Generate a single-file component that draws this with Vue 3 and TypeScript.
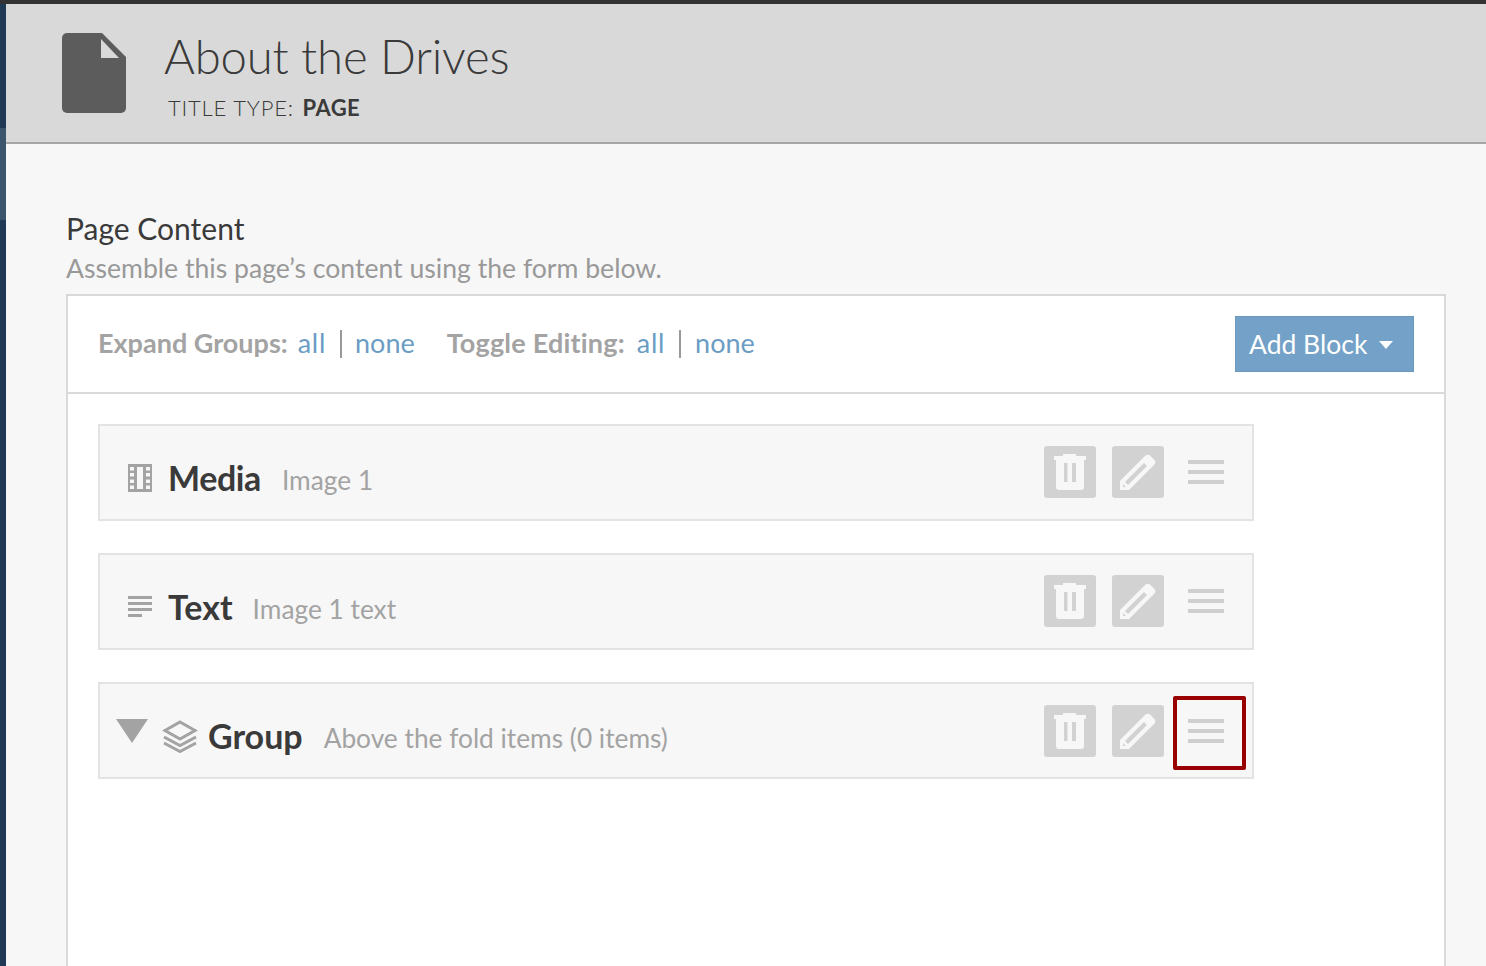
<script setup lang="ts">
interface Block { name: string; detail: string; kind: 'media' | 'text' | 'group'; flagged?: boolean }
const blocks: Block[] = [
  { name: 'Media', detail: 'Image 1', kind: 'media' },
  { name: 'Text', detail: 'Image 1 text', kind: 'text' },
  { name: 'Group', detail: 'Above the fold items (0 items)', kind: 'group', flagged: true },
]
</script>

<template>
  <div class="app">
    <div class="topline"></div>
    <div class="shell">
      <div class="rail"><div class="rail-a"></div><div class="rail-b"></div><div class="rail-c"></div></div>
      <div class="main">
        <header class="head">
          <svg class="doc" width="64" height="80" viewBox="0 0 64 80">
            <path fill="#5c5c5c" d="M5 0H40L64 24V75a5 5 0 0 1-5 5H5a5 5 0 0 1-5-5V5a5 5 0 0 1 5-5Z"/>
            <path fill="#d9d9d9" d="M39 6L57 25H39Z"/>
          </svg>
          <div class="head-text">
            <h1>About the Drives</h1>
            <p class="type">TITLE TYPE: <b>PAGE</b></p>
          </div>
        </header>
        <section class="content">
          <h2>Page Content</h2>
          <p class="hint">Assemble this page’s content using the form below.</p>
          <div class="panel">
            <div class="toolbar">
              <div class="filter"><strong>Expand Groups:</strong><a class="all">all</a><i></i><a>none</a></div>
              <div class="filter second"><strong>Toggle Editing:</strong><a class="all">all</a><i></i><a>none</a></div>
              <button class="add">Add Block<span class="caret"></span></button>
            </div>
            <div class="list">
              <div v-for="b in blocks" :key="b.name" class="block" :class="b.kind">
                <svg v-if="b.kind === 'group'" class="tri" width="32" height="24" viewBox="0 0 32 24"><path fill="#a3a3a3" d="M0 0H32L16 24Z"/></svg>
                <svg v-if="b.kind === 'media'" class="ic" width="24" height="28" viewBox="0 0 24 28">
                  <path fill="#a3a3a3" fill-rule="evenodd" d="M0 0H24V28H0ZM2 3V6.500H6V3ZM2 9V12.500H6V9ZM2 15.500V19H6V15.500ZM2 21.500V25H6V21.500ZM18 3V6.500H22V3ZM18 9V12.500H22V9ZM18 15.500V19H22V15.500ZM18 21.500V25H22V21.500ZM9 3V25H15V3Z"/>
                </svg>
                <svg v-if="b.kind === 'text'" class="ic" width="24" height="22" viewBox="0 0 24 22">
                  <path fill="#a3a3a3" d="M0 0H24V3H0ZM0 6H24V9H0ZM0 12H24V15H0ZM0 18H14V21H0Z"/>
                </svg>
                <svg v-if="b.kind === 'group'" class="ic" width="36" height="33" viewBox="0 0 36 33" fill="none" stroke="#a3a3a3" stroke-width="3">
                  <path d="M18 2L33 10.500L18 19L3 10.500Z"/>
                  <path d="M2 17L18 25.500L34 17"/>
                  <path d="M2 23L18 31.500L34 23"/>
                </svg>
                <span class="name">{{ b.name }}</span>
                <span class="detail">{{ b.detail }}</span>
                <div class="actions">
                  <span class="square">
                    <svg width="32" height="36" viewBox="0 0 32 36">
                      <path fill="#f7f7f7" fill-rule="evenodd" d="M9 0H22V2H32V6H30V33a3 3 0 0 1-3 3H5a3 3 0 0 1-3-3V6H0V2H9ZM10 9V28H13.500V9ZM18 9V28H22V9Z"/>
                    </svg>
                  </span>
                  <span class="square">
                    <svg width="36" height="36" viewBox="0 0 36 36">
                      <path fill="#f7f7f7" d="M0 36V27L25 2a4 4 0 0 1 5.500 0L34 5.500a4 4 0 0 1 0 5.500L9 36Z"/>
                      <path fill="#d2d2d2" d="M5 28L24 9L27 12L8 31ZM3 33V30L6 33Z"/>
                    </svg>
                  </span>
                  <span class="grip"><span></span><span></span><span></span></span>
                </div>
                <div v-if="b.flagged" class="flag"></div>
              </div>
            </div>
          </div>
        </section>
      </div>
    </div>
  </div>
</template>

<style scoped>
.app { height: 966px; overflow: hidden; display: flex; flex-direction: column; background: #f7f7f7; color: #3a3a3a; font-family: "Lato", "Open Sans", sans-serif; }
.topline { height: 4px; background: #333; flex: none; }
.shell { flex: 1; display: flex; min-height: 0; }
.rail { width: 6px; flex: none; display: flex; flex-direction: column; }
.rail-a { height: 124px; background: #203a56; }
.rail-b { height: 92px; background: #3c546c; }
.rail-c { flex: 1; background: #203a56; }
.main { flex: 1; min-width: 0; }
.head { height: 138px; box-sizing: content-box; background: #d9d9d9; border-bottom: 2px solid #a6a6a6; display: flex; padding-left: 56px; }
.doc { margin-top: 29px; }
.head-text { margin-left: 38px; }
h1 { margin: 21px 0 0; font-size: 47.300px; line-height: 62px; font-weight: 300; letter-spacing: -0.2px; color: #3a3a3a; }
.type { margin: 7px 0 0 4px; font-size: 22px; line-height: 28px; font-weight: 300; letter-spacing: 0.8px; }
.type b { font-weight: 700; margin-left: 2px; letter-spacing: 0.4px; }
.content { padding: 64px 40px 0 60px; }
h2 { margin: 0; font-size: 30px; line-height: 40px; font-weight: 400; color: #3a3a3a; }
.hint { margin: 0; font-size: 26.600px; line-height: 40px; color: #999; }
.panel { margin-top: 6px; background: #fff; border: 2px solid #d9d9d9; height: 700px; }
.toolbar { height: 98px; box-sizing: border-box; border-bottom: 2px solid #d9d9d9; display: flex; align-items: center; padding: 0 30px 0; font-size: 27px; }
.filter { display: flex; align-items: center; margin-top: -4px; }
.filter strong { font-weight: 700; color: #a3a3a3; margin-right: 10px; }
.filter a { color: #6b9cc4; }
.filter .all { letter-spacing: 0.7px; }
.filter i { width: 2px; height: 28px; background: #999; margin: 4px 13px 0 14px; }
.second { margin-left: 32px; }
.second strong { letter-spacing: 0.2px; margin-right: 12px; }
.second i { margin-right: 14px; }
.add { margin-left: auto; width: 179px; height: 56px; background: #73a1c7; border: 1px solid #6a98be; color: #fff; font: inherit; font-size: 26.500px; padding: 0 0 1px 13px; display: flex; align-items: center; justify-content: flex-start; gap: 12px; }
.caret { flex: none; margin-top: 2px; border-style: solid; border-width: 8px 7.500px 0; border-color: #fff transparent transparent; }
.list { padding: 30px; display: flex; flex-direction: column; gap: 32px; align-items: flex-start; }
.block { position: relative; width: 1156px; height: 97px; box-sizing: border-box; border: 2px solid #e3e3e3; background: #f7f7f7; display: flex; align-items: center; padding-left: 28px; }
.tri { position: absolute; left: 16px; top: 35px; }
.ic { flex: none; margin-top: 11px; }
.group .ic { margin-top: 12px; }
.group { padding-left: 62px; }
.name { font-size: 34px; font-weight: 700; color: #3a3a3a; margin: 10px 0 0 16px; }
.media .name { letter-spacing: -0.4px; }
.detail { font-size: 26.300px; color: #a3a3a3; margin: 14px 0 0 20px; }
.media .detail, .group .detail { margin-left: 21px; }
.group .name { margin-left: 10px; }
.actions { margin-left: auto; margin-right: 28px; display: flex; align-items: center; align-self: flex-start; margin-top: 20px; }
.group .actions { margin-top: 21px; }
.square { width: 52px; height: 52px; margin-right: 16px; border-radius: 3px; background: #d2d2d2; display: flex; align-items: center; justify-content: center; }
.grip { width: 36px; margin-left: 8px; display: flex; flex-direction: column; gap: 6px; }
.grip span { height: 4px; background: #cfcfcf; }
.flag { position: absolute; left: 1073px; top: 12px; width: 73px; height: 74px; box-sizing: border-box; border: 4px solid #990000; border-radius: 2px; }
</style>
